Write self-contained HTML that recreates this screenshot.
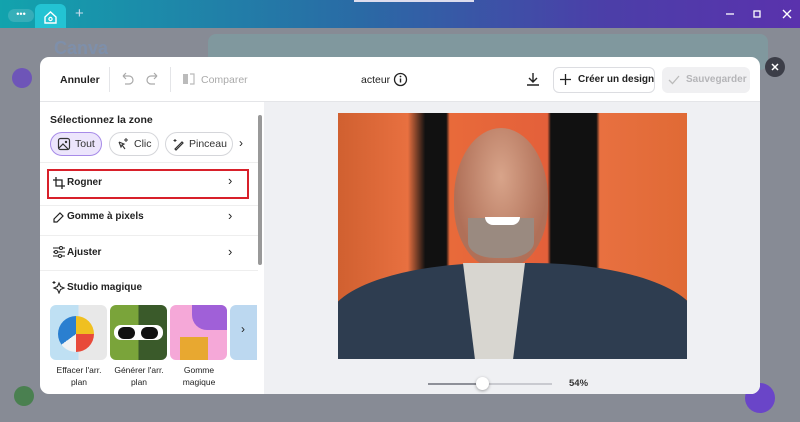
<!DOCTYPE html>
<html><head><meta charset="utf-8"><style>
*{box-sizing:border-box;margin:0;padding:0}
body{width:800px;height:422px;overflow:hidden;font-family:"Liberation Sans",sans-serif;background:#8b8f99;position:relative}
.top{position:absolute;left:0;top:0;width:800px;height:28px;background:linear-gradient(90deg,#12a3ad 0%,#2a6aa5 45%,#4b3fa8 75%,#5a32ad 100%)}
.tab{position:absolute;left:35px;top:4px;width:31px;height:24px;background:#23c3d3;border-radius:6px 6px 0 0}
.bg{position:absolute;top:28px;left:0;width:800px;height:394px;background:#878b95}
.modal{position:absolute;left:40px;top:57px;width:720px;height:337px;background:#fff;border-radius:9px;overflow:hidden}
.hdr{position:absolute;left:0;top:0;width:720px;height:45px;border-bottom:1px solid #e4e5e8;font-size:10.5px;color:#222}
.t{position:absolute;white-space:nowrap}
.right{position:absolute;left:224px;top:45px;width:496px;height:292px;background:#eff0f3}
.pill{position:absolute;height:24px;border:1px solid #d5d6da;border-radius:12px;font-size:10.5px;color:#333;background:#fff}
.thumb{position:absolute;top:248px;width:57px;height:55px;border-radius:6px;overflow:hidden}
.cap{position:absolute;font-size:8.5px;color:#222;text-align:center;width:66px;line-height:12px}
.sep{position:absolute;left:0;width:218px;height:1px;background:#eee}
.lbl{position:absolute;left:27px;font-size:10px;font-weight:bold;color:#222;white-space:nowrap}
.chev{position:absolute;left:188px;font-size:13px;color:#222}
</style></head><body>
<div class="top">
<div style="position:absolute;left:8px;top:9px;width:26px;height:13px;border-radius:7px;background:rgba(255,255,255,.15);color:#fff;font-size:9px;text-align:center;line-height:10px">•••</div>
<div class="tab"><svg width="31" height="24"><path d="M10 13l5.5-5 5.5 5v6h-11z" fill="none" stroke="#fff" stroke-width="1.4"/><circle cx="15.5" cy="15" r="1.6" fill="none" stroke="#fff" stroke-width="1.2"/></svg></div>
<div class="t" style="left:75px;top:5px;color:#cde;font-size:15px">+</div>
<div style="position:absolute;left:354px;top:0;width:120px;height:2px;background:#dde"></div>
<svg style="position:absolute;left:722px;top:8px" width="70" height="12"><path d="M4 6h8" stroke="#fff" stroke-width="1.3"/><rect x="32" y="3" width="6" height="6" fill="none" stroke="#fff" stroke-width="1.3"/><path d="M61 2l8 8M69 2l-8 8" stroke="#fff" stroke-width="1.4"/></svg>
</div>
<div class="bg">
<div style="position:absolute;left:54px;top:10px;font-size:18px;font-weight:bold;color:#7b92b4;opacity:.7">Canva</div>
<div style="position:absolute;left:208px;top:6px;width:560px;height:36px;border-radius:8px;background:#80989e"></div>
<div style="position:absolute;left:12px;top:40px;width:20px;height:20px;border-radius:50%;background:#6e55b8"></div>
<div style="position:absolute;left:14px;top:358px;width:20px;height:20px;border-radius:50%;background:#4a8050"></div>
<div style="position:absolute;left:745px;top:355px;width:30px;height:30px;border-radius:50%;background:#6a45c8"></div>
</div>
<div style="position:absolute;left:765px;top:57px;width:20px;height:20px;border-radius:50%;background:#3c3e48"><svg width="20" height="20"><path d="M7 7l6 6M13 7l-6 6" stroke="#fff" stroke-width="1.5"/></svg></div>
<div class="modal">
<div class="hdr">
<div class="t" style="left:20px;top:17px;font-weight:bold">Annuler</div>
<div style="position:absolute;left:69px;top:10px;width:1px;height:25px;background:#e4e5e8"></div>
<svg style="position:absolute;left:80px;top:15px" width="40" height="14"><path d="M3 4h6a4 4 0 010 8H5M3 4l3-3M3 4l3 3" fill="none" stroke="#aaa" stroke-width="1.2"/><path d="M37 4h-6a4 4 0 000 8h4M37 4l-3-3M37 4l-3 3" fill="none" stroke="#aaa" stroke-width="1.2"/></svg>
<div style="position:absolute;left:130px;top:10px;width:1px;height:25px;background:#e4e5e8"></div>
<svg style="position:absolute;left:142px;top:16px" width="14" height="12"><rect x="1" y="1" width="5" height="10" fill="#bbb"/><path d="M8 1h4v10H8" fill="none" stroke="#bbb" stroke-width="1.2"/></svg>
<div class="t" style="left:161px;top:17px;color:#aaa">Comparer</div>
<div class="t" style="left:321px;top:17px">acteur</div>
<svg style="position:absolute;left:353px;top:15px" width="15" height="15"><circle cx="7.5" cy="7.5" r="6" fill="none" stroke="#222" stroke-width="1.3"/><path d="M7.5 6.5v4" stroke="#222" stroke-width="1.4"/><circle cx="7.5" cy="4.5" r=".9" fill="#222"/></svg>
<svg style="position:absolute;left:485px;top:14px" width="16" height="16"><path d="M8 2v9M4 7l4 4 4-4M2 14h12" fill="none" stroke="#222" stroke-width="1.4"/></svg>
<div style="position:absolute;left:513px;top:10px;width:102px;height:26px;border:1px solid #dcdde1;border-radius:6px"></div>
<svg style="position:absolute;left:519px;top:16px" width="13" height="13"><path d="M6.5 1v11M1 6.5h11" stroke="#222" stroke-width="1.3"/></svg>
<div class="t" style="left:538px;top:17px;font-weight:bold;font-size:10px">Créer un design</div>
<div style="position:absolute;left:622px;top:10px;width:88px;height:26px;background:#f0f0f2;border-radius:6px"></div>
<svg style="position:absolute;left:628px;top:17px" width="12" height="12"><path d="M1 6l3.5 3.5L11 2" fill="none" stroke="#bbb" stroke-width="1.3"/></svg>
<div class="t" style="left:646px;top:17px;color:#b5b5b8;font-weight:bold;font-size:10px">Sauvegarder</div>
</div>
<div class="t" style="left:10px;top:57px;font-size:10.5px;font-weight:bold;color:#222">Sélectionnez la zone</div>
<div class="pill" style="left:10px;top:75px;width:52px;background:#ece5fc;border:1px solid #a78be8"><svg style="position:absolute;left:6px;top:4px" width="14" height="14"><rect x="1.5" y="1.5" width="11" height="11" rx="2" fill="none" stroke="#333" stroke-width="1.2"/><path d="M2 11l4-4 5 5" fill="none" stroke="#333" stroke-width="1.2"/><circle cx="9" cy="5" r="1.2" fill="#333"/></svg><span class="t" style="left:24px;top:5px">Tout</span></div>
<div class="pill" style="left:69px;top:75px;width:50px"><svg style="position:absolute;left:6px;top:4px" width="14" height="14"><path d="M3 5l5 2-2 1 3 4M3 5l2 5 1-2" fill="none" stroke="#333" stroke-width="1.1"/><path d="M10 1v4M8 3h4" stroke="#333" stroke-width="1"/></svg><span class="t" style="left:24px;top:5px">Clic</span></div>
<div class="pill" style="left:125px;top:75px;width:68px"><svg style="position:absolute;left:6px;top:4px" width="14" height="14"><path d="M3 12l7-7 1 1-7 7z" fill="none" stroke="#333" stroke-width="1.2"/><path d="M3 2v3M1.5 3.5h3" stroke="#333"/></svg><span class="t" style="left:23px;top:5px">Pinceau</span></div>
<div class="t" style="left:199px;top:79px;font-size:12px;color:#222">›</div>
<div class="sep" style="top:105px"></div>
<div style="position:absolute;left:7px;top:112px;width:202px;height:30px;border:2px solid #d8202a"></div>
<svg style="position:absolute;left:12px;top:119px" width="14" height="14"><path d="M4 1v9h9M1 4h9v9" fill="none" stroke="#222" stroke-width="1.3"/></svg>
<div class="lbl" style="top:120px">Rogner</div>
<div class="chev" style="top:116px">›</div>
<div class="sep" style="top:148px"></div>
<svg style="position:absolute;left:12px;top:153px" width="14" height="14"><path d="M2 9l6-6 3 3-6 6H2z" fill="none" stroke="#222" stroke-width="1.2"/></svg>
<div class="lbl" style="top:154px">Gomme à pixels</div>
<div class="chev" style="top:151px">›</div>
<div class="sep" style="top:178px"></div>
<svg style="position:absolute;left:12px;top:188px" width="14" height="14"><path d="M1 3h12M1 7h12M1 11h12" stroke="#222" stroke-width="1.1"/><circle cx="9" cy="3" r="1.5" fill="#fff" stroke="#222"/><circle cx="4" cy="7" r="1.5" fill="#fff" stroke="#222"/><circle cx="8" cy="11" r="1.5" fill="#fff" stroke="#222"/></svg>
<div class="lbl" style="top:190px">Ajuster</div>
<div class="chev" style="top:187px">›</div>
<div class="sep" style="top:213px"></div>
<svg style="position:absolute;left:12px;top:223px" width="14" height="14"><path d="M7 3l1.5 3.5L12 8l-3.5 1.5L7 13l-1.5-3.5L2 8l3.5-1.5z" fill="none" stroke="#222" stroke-width="1.1"/><path d="M2 1v3M.5 2.5h3" stroke="#222"/></svg>
<div class="lbl" style="top:225px">Studio magique</div>
<div class="thumb" style="left:10px;background:linear-gradient(90deg,#bfe0f3 50%,#e8e8e8 50%)"><div style="position:absolute;left:8px;top:11px;width:36px;height:36px;border-radius:50%;background:conic-gradient(#f0c020 0 25%,#e84a3a 0 50%,#f2f2f2 0 65%,#2a7fd0 0 100%)"></div></div>
<div class="thumb" style="left:70px;background:linear-gradient(90deg,#7aa43a 50%,#3a5a2a 50%)"><div style="position:absolute;left:4px;top:20px;width:49px;height:15px;background:#fff;border-radius:7px"></div><div style="position:absolute;left:8px;top:22px;width:17px;height:12px;background:#111;border-radius:6px"></div><div style="position:absolute;left:31px;top:22px;width:17px;height:12px;background:#111;border-radius:6px"></div></div>
<div class="thumb" style="left:130px;background:#f5a8d8"><div style="position:absolute;left:22px;top:0;width:35px;height:25px;background:#a060d8;border-radius:0 0 0 15px"></div><div style="position:absolute;left:10px;top:32px;width:28px;height:23px;background:#e8a830"></div></div>
<div class="thumb" style="left:190px;width:27px;background:#bcd8f0;border-radius:6px 0 0 6px"></div>
<div class="t" style="left:201px;top:265px;font-size:12px;color:#222">›</div>
<div class="cap" style="left:6px;top:307px">Effacer l'arr.<br>plan</div>
<div class="cap" style="left:66px;top:307px">Générer l'arr.<br>plan</div>
<div class="cap" style="left:126px;top:307px">Gomme<br>magique</div>
<div style="position:absolute;left:218px;top:58px;width:4px;height:150px;background:#999;border-radius:2px"></div>
<div class="right">
<div style="position:absolute;left:74px;top:11px;width:349px;height:246px;overflow:hidden;background:linear-gradient(90deg,#d06030 0%,#e87040 20%,#111 25%,#111 31%,#e86a3a 32%,#e4603a 60%,#111 61%,#111 74%,#e87040 75%,#e06a35 100%)">
<div style="position:absolute;left:116px;top:15px;width:94px;height:140px;border-radius:50% 50% 45% 45%;background:radial-gradient(ellipse at 50% 35%,#d8a48a,#b07058 70%)"></div>
<div style="position:absolute;left:130px;top:105px;width:66px;height:40px;border-radius:0 0 40% 40%;background:#9a8a80"></div>
<div style="position:absolute;left:147px;top:104px;width:35px;height:8px;border-radius:0 0 8px 8px;background:#fff"></div>
<div style="position:absolute;left:-10px;top:150px;width:370px;height:130px;border-radius:45% 45% 0 0;background:#2e3d50"></div>
<div style="position:absolute;left:125px;top:150px;width:62px;height:100px;background:#d8d6d0;clip-path:polygon(0 0,100% 0,80% 100%,20% 100%)"></div>
</div>
<div style="position:absolute;left:164px;top:281px;width:124px;height:2px;background:#c9cad0"></div>
<div style="position:absolute;left:164px;top:281px;width:55px;height:2px;background:#8e9098"></div>
<div style="position:absolute;left:212px;top:275px;width:13px;height:13px;border-radius:50%;background:#fff;box-shadow:0 1px 3px rgba(0,0,0,.35)"></div>
<div class="t" style="left:305px;top:276px;font-size:9.5px;font-weight:bold;color:#333">54%</div>
</div>
</div>
</body></html>
